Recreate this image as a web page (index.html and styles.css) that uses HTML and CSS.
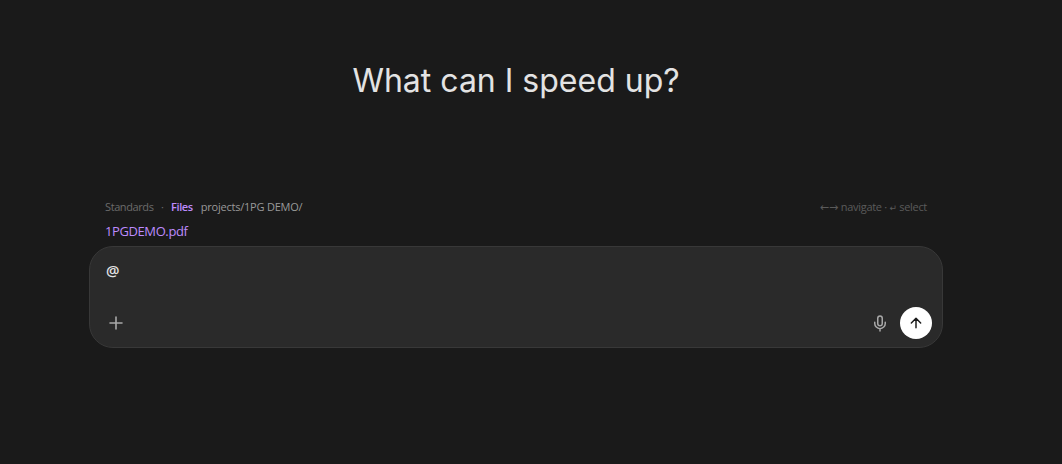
FILE: index.html
```html
<!DOCTYPE html>
<html lang="en">
<head>
    <meta charset="UTF-8">
    <meta name="viewport" content="width=device-width, initial-scale=1.0">
    <title>Prompt</title>
    <link rel="stylesheet" href="styles.css">
</head>
<body>
    <main class="page">
        <h1 class="title">What can I speed up?</h1>
        <div class="picker">
            <div class="tabs">
                <span class="tab">Standards</span>
                <span class="dot">·</span>
                <span class="tab active">Files</span>
                <span class="path">projects/1PG DEMO/</span>
            </div>
            <div class="hint"><span class="arrows">←→</span> navigate · <span class="enter">↵</span> select</div>
        </div>
        <div class="file">1PGDEMO.pdf</div>
        <div class="composer">
            <div class="input" contenteditable="true" spellcheck="false">@</div>
            <div class="actions">
                <button class="icon-btn" aria-label="Add">
                    <svg width="20" height="20" viewBox="0 0 20 20" fill="none" stroke="currentColor" stroke-width="1.6" stroke-linecap="round"><path d="M10 4v12M4 10h12"/></svg>
                </button>
                <button class="icon-btn mic" aria-label="Dictate">
                    <svg width="18" height="18" viewBox="0 0 24 24" fill="none" stroke="currentColor" stroke-width="2" stroke-linecap="round" stroke-linejoin="round"><rect x="9" y="2.5" width="6" height="13" rx="3"/><path d="M19 11v1.5a7 7 0 0 1-14 0V11M12 19.5v3"/></svg>
                </button>
                <button class="send" aria-label="Send">
                    <svg width="16" height="16" viewBox="0 0 24 24" fill="none" stroke="currentColor" stroke-width="2.2" stroke-linecap="round" stroke-linejoin="round"><path d="M12 19V5M5 12l7-7 7 7"/></svg>
                </button>
            </div>
        </div>
    </main>
</body>
</html>
```
FILE: styles.css
```css
* {
    box-sizing: border-box;
}
body {
    margin: 0;
    background: #1a1a1a;
    color: #e3e3e3;
    font-family: "Open Sans", "Noto Sans", sans-serif;
}
.page {
    width: 854px;
    margin-left: 89px;
    padding-top: 60px;
}
.title {
    margin: 0 0 97px;
    font-family: Inter, sans-serif;
    font-size: 32px;
    font-weight: 400;
    line-height: 42px;
    text-align: center;
}
.picker {
    display: flex;
    justify-content: space-between;
    padding: 0 16px;
    height: 15px;
    font-size: 11px;
    line-height: 15px;
    letter-spacing: -0.4px;
    color: #6b6b6b;
}
.tabs {
    display: flex;
}
.dot {
    margin: 0 7.5px;
}
.tab.active {
    margin-right: 8px;
    font-weight: 600;
    color: #bd8bfd;
}
.path {
    letter-spacing: -0.22px;
    color: #999;
}
.hint {
    letter-spacing: -0.3px;
    color: #5a5a5a;
}
.arrows {
    font-family: "DejaVu Sans", sans-serif;
    letter-spacing: 0;
}
.enter {
    font-family: "DejaVu Sans", sans-serif;
    font-size: 9px;
}
.file {
    margin: 8px 0 6px;
    padding: 0 16px;
    font-size: 13px;
    line-height: 18px;
    letter-spacing: -0.4px;
    color: #bd8bfd;
}
.composer {
    height: 102px;
    padding: 12px 10px 8px 16px;
    border: 1px solid #383838;
    border-radius: 24px;
    background: #2a2a2a;
}
.input {
    height: 48px;
    font-size: 15px;
    font-weight: 600;
    line-height: 22px;
    outline: none;
}
.actions {
    display: flex;
    align-items: center;
    height: 32px;
}
.icon-btn,
.send {
    display: flex;
    align-items: center;
    justify-content: center;
    padding: 0;
    border: none;
    background: none;
    color: #a8a8a8;
}
.mic {
    margin-left: auto;
    margin-right: 10.6px;
}
.send {
    width: 32px;
    height: 32px;
    border-radius: 50%;
    background: #fff;
    color: #1a1a1a;
}
```
